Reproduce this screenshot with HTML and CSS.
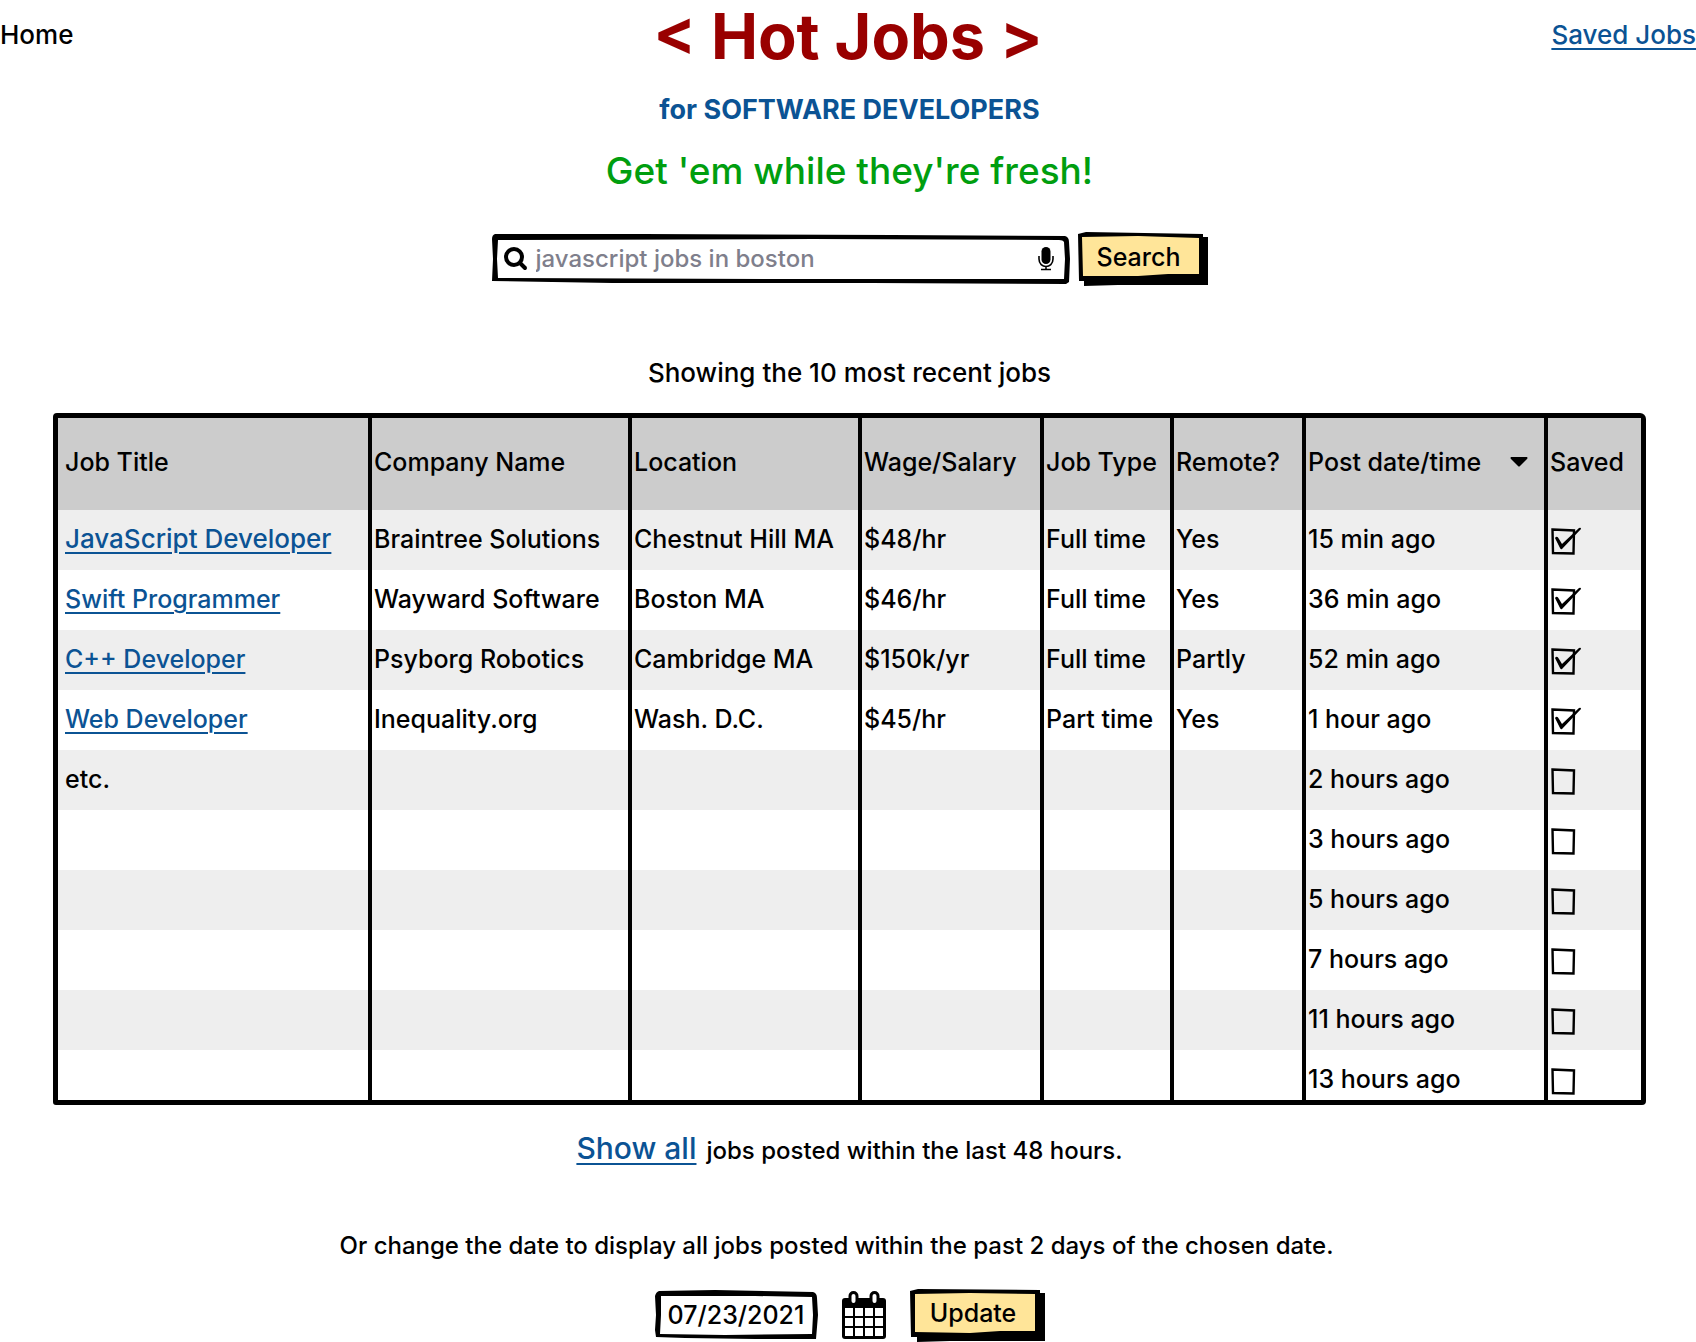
FILE: index.html
```html
<!DOCTYPE html>
<html lang="en">
<head>
<meta charset="utf-8">
<title>Hot Jobs for Software Developers</title>
<meta name="viewport" content="width=device-width, initial-scale=1">
<link rel="stylesheet" href="styles.css">
</head>
<body>
<header class="top">
  <span class="home">Home</span>
  <h1 class="title">&lt; Hot Jobs &gt;</h1>
  <a class="saved-link" href="#saved">Saved Jobs</a>
</header>
<main class="page">
  <h2 class="subtitle">for SOFTWARE DEVELOPERS</h2>
  <p class="tagline">Get 'em while they're fresh!</p>

  <form class="search">
    <div class="search-box">
      <svg class="sketch" viewBox="0 0 578 50" preserveAspectRatio="none" aria-hidden="true"><path fill-rule="evenodd" d="M3 0 L150 0 L400 1 L573 2 Q577 3 577 8 L578 25 L577 48 L574 50 L380 49 L120 49 L0 47 L1 25 L0 5 Q0 1 3 0Z M6 6 L5 25 L6 44 L300 45 L572 45 L573 25 L572 8 Q571 6 567 6 L320 5Z"/></svg>
      <svg class="icon-search" viewBox="0 0 24 24" aria-hidden="true"><circle cx="10" cy="10" r="8" fill="none" stroke="#000" stroke-width="4"/><path d="M16 16L21 21" stroke="#000" stroke-width="4" stroke-linecap="round"/></svg>
      <input class="search-input" type="text" aria-label="Search jobs" placeholder="javascript jobs in boston">
      <svg class="icon-mic" viewBox="0 0 16 24" aria-hidden="true"><rect x="3.5" y="0" width="9" height="17" rx="4.5"/><path d="M1 9V12C1 22 15 22 15 12V9M8 19V22M3 22.5H13" fill="none" stroke="#000" stroke-width="1.6"/></svg>
    </div>
    <button class="btn btn-search" type="button">
      <svg class="sketch" viewBox="0 0 130 54" preserveAspectRatio="none" aria-hidden="true"><path d="M0 2L8 0L125 2V5H130V53L40 53L6 54V49H1Z"/><path fill="#ffe599" d="M4 5L60 4L121 6V42L90 42L60 44L5 44Z"/></svg>
      <span class="btn-label">Search</span>
    </button>
  </form>

  <p class="showing">Showing the 10 most recent jobs</p>

  <table class="jobs">
    <colgroup><col><col class="c-company"><col class="c-location"><col class="c-wage"><col class="c-type"><col class="c-remote"><col class="c-posted"><col class="c-saved"></colgroup>
    <thead>
      <tr><th>Job Title</th><th>Company Name</th><th>Location</th><th>Wage/Salary</th><th>Job Type</th><th>Remote?</th><th><span class="sort">Post date/time<svg class="caret" viewBox="0 0 18 10" aria-hidden="true"><path d="M1 0H17Q18 1 17 2L10 9Q9 10 8 9L1 2Q0 1 1 0Z"/></svg></span></th><th>Saved</th></tr>
    </thead>
    <tbody>
      <tr><td><a class="lead" href="#job1">JavaScript Developer</a></td><td>Braintree Solutions</td><td>Chestnut Hill MA</td><td>$48/hr</td><td>Full time</td><td>Yes</td><td>15 min ago</td><td><input class="tick" type="checkbox" aria-label="Saved" checked></td></tr>
      <tr><td><a href="#job2">Swift Programmer</a></td><td>Wayward Software</td><td>Boston MA</td><td>$46/hr</td><td>Full time</td><td>Yes</td><td>36 min ago</td><td><input class="tick" type="checkbox" aria-label="Saved" checked></td></tr>
      <tr><td><a href="#job3">C++ Developer</a></td><td>Psyborg Robotics</td><td>Cambridge MA</td><td>$150k/yr</td><td>Full time</td><td>Partly</td><td>52 min ago</td><td><input class="tick" type="checkbox" aria-label="Saved" checked></td></tr>
      <tr><td><a href="#job4">Web Developer</a></td><td>Inequality.org</td><td>Wash. D.C.</td><td>$45/hr</td><td>Part time</td><td>Yes</td><td>1 hour ago</td><td><input class="tick" type="checkbox" aria-label="Saved" checked></td></tr>
      <tr><td>etc.</td><td></td><td></td><td></td><td></td><td></td><td>2 hours ago</td><td><input class="tick" type="checkbox" aria-label="Saved"></td></tr>
      <tr><td></td><td></td><td></td><td></td><td></td><td></td><td>3 hours ago</td><td><input class="tick" type="checkbox" aria-label="Saved"></td></tr>
      <tr><td></td><td></td><td></td><td></td><td></td><td></td><td>5 hours ago</td><td><input class="tick" type="checkbox" aria-label="Saved"></td></tr>
      <tr><td></td><td></td><td></td><td></td><td></td><td></td><td>7 hours ago</td><td><input class="tick" type="checkbox" aria-label="Saved"></td></tr>
      <tr><td></td><td></td><td></td><td></td><td></td><td></td><td>11 hours ago</td><td><input class="tick" type="checkbox" aria-label="Saved"></td></tr>
      <tr><td></td><td></td><td></td><td></td><td></td><td></td><td>13 hours ago</td><td><input class="tick" type="checkbox" aria-label="Saved"></td></tr>
    </tbody>
  </table>

  <p class="show-all"><a class="show-link" href="#all">Show all</a><span>jobs posted within the last 48 hours.</span></p>
  <p class="change">Or change the date to display all jobs posted within the past 2 days of the chosen date.</p>

  <form class="date-row">
    <div class="date-box">
      <svg class="sketch" viewBox="0 0 163 50" preserveAspectRatio="none" aria-hidden="true"><path fill-rule="evenodd" d="M4 1L60 0L158 2Q162 3 162 8L163 25L161 49L100 49L30 48L1 47L0 40L1 25L0 6Q1 2 4 1Z M6 6L6 25L5 44L70 45L157 44L158 25L157 7L100 6Z"/></svg>
      <input class="date-input" type="text" aria-label="Date" value="07/23/2021">
    </div>
    <svg class="icon-cal" viewBox="0 0 46 48" role="img" aria-label="Calendar"><rect x="1" y="7" width="44" height="41" rx="3"/><path fill="#fff" d="M4 17h8v8H4zM14 17h8v8h-8zM24 17h8v8h-8zM34 17h8v8h-8zM4 27h8v8H4zM14 27h8v8h-8zM24 27h8v8h-8zM34 27h8v8h-8zM4 37h8v8H4zM14 37h8v8h-8zM24 37h8v8h-8zM34 37h8v8h-8z"/><rect x="9" y="1.500" width="7" height="12" rx="3.500" fill="#fff" stroke="#000" stroke-width="3"/><rect x="30" y="1.500" width="7" height="12" rx="3.500" fill="#fff" stroke="#000" stroke-width="3"/></svg>
    <button class="btn btn-update" type="button">
      <svg class="sketch" viewBox="0 0 135 54" preserveAspectRatio="none" aria-hidden="true"><path d="M0 3L8 1L130 2V5H135V53L40 53L7 54V49H1Z"/><path fill="#ffe599" d="M5 6L60 5L125 6V43L90 43L60 45L5 44Z"/></svg>
      <span class="btn-label">Update</span>
    </button>
  </form>
</main>
</body>
</html>
```
FILE: styles.css
```css
* {
  box-sizing: border-box;
}

body {
  margin: 0;
  background: #fff;
  color: #000;
  font: 500 26px/32px Inter, "Liberation Sans", sans-serif;
}

h1, h2, p {
  margin: 0;
}

a {
  color: #0b5394;
  text-decoration: underline;
  text-decoration-thickness: 2px;
  text-underline-offset: 4px;
}

input, button {
  font: inherit;
  color: inherit;
}

.top {
  display: grid;
  grid-template-columns: 1fr auto 1fr;
}

.home {
  padding-top: 19px;
}

.title {
  color: #900;
  font-size: 63px;
  line-height: 72px;
  font-weight: 700;
}

.saved-link {
  justify-self: end;
  padding-top: 19px;
}

.page {
  display: flex;
  flex-direction: column;
  align-items: center;
  padding-left: 3px;
}

.subtitle {
  margin-top: 22px;
  color: #0b5394;
  font-size: 27px;
  font-weight: 700;
}

.tagline {
  margin-top: 23px;
  color: #009e0f;
  font-size: 37px;
  line-height: 44px;
}

.search {
  display: flex;
  align-items: center;
  gap: 8px;
  margin-top: 39px;
}

.sketch {
  position: absolute;
  inset: 0;
  width: 100%;
  height: 100%;
}

.search-box {
  position: relative;
  display: flex;
  align-items: center;
  width: 578px;
  height: 50px;
  padding: 0 16px 0 12px;
}

.search-input, .date-input {
  position: relative;
  flex: 1;
  min-width: 0;
  height: 32px;
  padding: 0;
  border: 0;
  outline: 0;
  background: none;
}

.search-input {
  margin-left: 8px;
  font-size: 24px;
}

.search-input::placeholder {
  color: #7f7f8c;
  opacity: 1;
}

.icon-search {
  position: relative;
  width: 24px;
  height: 24px;
}

.icon-mic {
  position: relative;
  width: 16px;
  height: 24px;
}

.btn {
  position: relative;
  height: 54px;
  padding: 0 8px 4px 0;
  border: 0;
  background: none;
  font-size: 25px;
}

.btn-search {
  width: 130px;
}

.btn-update {
  width: 135px;
}

.btn-label {
  position: relative;
}

.showing {
  margin-top: 71px;
}

.jobs {
  align-self: stretch;
  margin: 24px 50px 0;
  table-layout: fixed;
  border: 5px solid #000;
  border-radius: 4px 6px 4px 3px;
  border-spacing: 0;
  font-size: 25px;
}

.c-company { width: 260px; }
.c-location { width: 230px; }
.c-wage { width: 182px; }
.c-type { width: 130px; }
.c-remote { width: 132px; }
.c-posted { width: 242px; }
.c-saved { width: 93px; }

.jobs th, .jobs td {
  height: 60px;
  padding: 13px 0 0 2px;
  border-right: 4px solid #000;
  font-weight: 500;
  text-align: left;
  vertical-align: top;
  white-space: nowrap;
}

.jobs th {
  height: 92px;
  padding-top: 28px;
}

.jobs thead {
  background: #ccc;
}

.jobs th:first-child, .jobs td:first-child {
  padding-left: 7px;
}

.jobs th:last-child, .jobs td:last-child {
  border-right: 0;
}

.jobs tbody tr:nth-child(odd) {
  background: #eee;
}

.jobs tbody tr:last-child td {
  height: 50px;
}

.jobs .lead {
  font-size: 26px;
}

.sort {
  display: flex;
  align-items: center;
  justify-content: space-between;
  padding-right: 16px;
}

.caret {
  width: 18px;
  height: 10px;
}

.tick {
  appearance: none;
  display: block;
  width: 32px;
  height: 28px;
  margin: 4px 0 0 1px;
  background: url("data:image/svg+xml,%3Csvg xmlns='http://www.w3.org/2000/svg' width='32' height='28' fill='none' stroke='%23000' stroke-width='2.4'%3E%3Cpath d='M1.500 2.500L23 3.500L22.500 26.500L2 26Z'/%3E%3C/svg%3E") no-repeat;
}

.tick:checked {
  background-image: url("data:image/svg+xml,%3Csvg xmlns='http://www.w3.org/2000/svg' width='32' height='28'%3E%3Cpath d='M1.500 2.500L23 3.500L22.500 26.500L2 26Z' fill='none' stroke='%23000' stroke-width='2.4'/%3E%3Cpath d='M4 11Q6 8 8 12L11 17L28 1Q30 0 30 2L11 22Q10 23 9 21Z'/%3E%3C/svg%3E");
}

.show-all {
  display: flex;
  align-items: baseline;
  gap: 10px;
  margin-top: 25px;
  font-size: 24px;
  line-height: 36px;
}

.show-link {
  font-size: 30px;
}

.change {
  margin-top: 61px;
  padding-right: 26px;
  font-size: 24px;
}

.date-row {
  display: flex;
  align-items: center;
  gap: 23px;
  margin-top: 26px;
}

.date-box {
  position: relative;
  display: flex;
  align-items: center;
  width: 163px;
  height: 50px;
  padding: 0 6px;
}

.date-input {
  text-align: center;
  font-size: 25px;
}

.icon-cal {
  width: 46px;
  height: 48px;
}
```
